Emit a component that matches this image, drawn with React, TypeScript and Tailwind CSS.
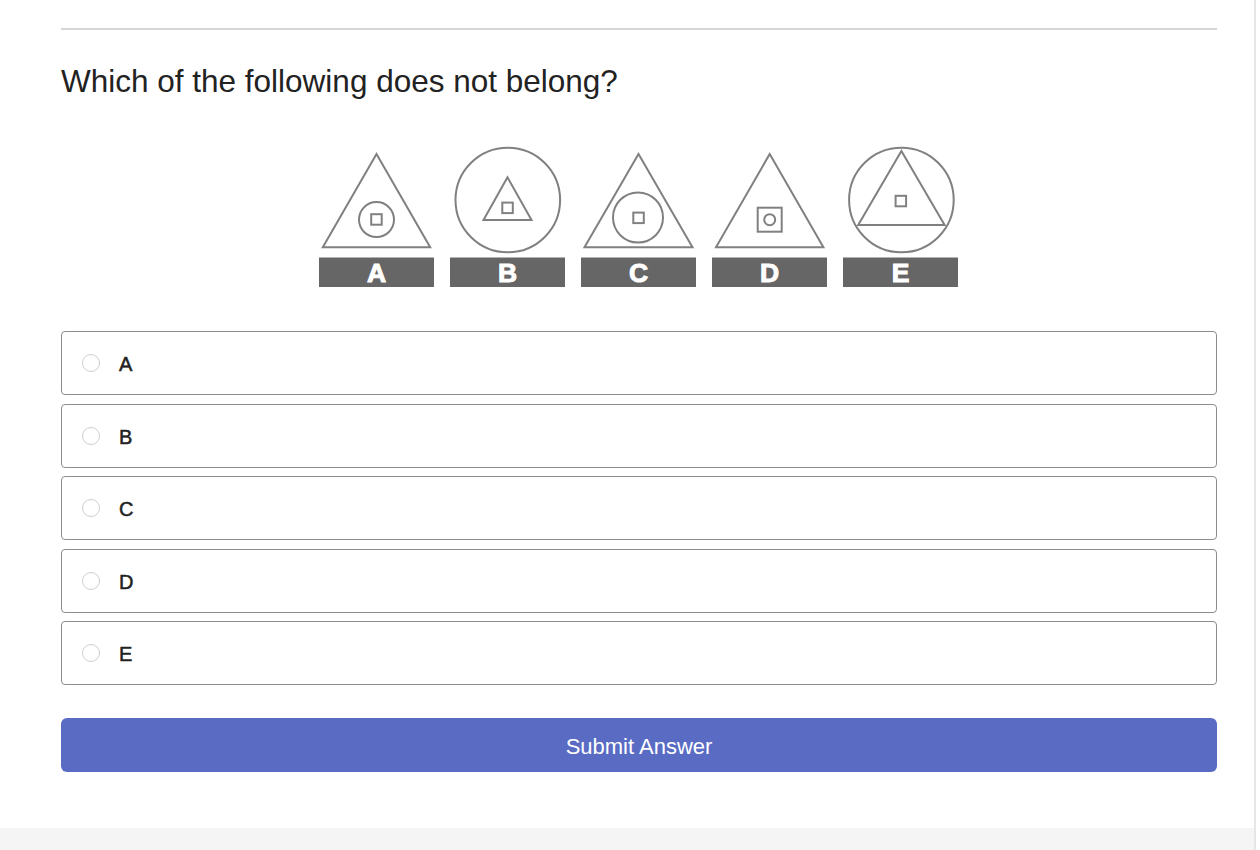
import { useState } from 'react';

const options = ['A', 'B', 'C', 'D', 'E'];

const stroke = '#808080';

const FiguresRow = () => {
    const labels = ['A', 'B', 'C', 'D', 'E'];
    return (
        <svg width="640" height="142" viewBox="0 0 640 142" fill="none">
            {/* A: triangle with circle and square */}
            <polygon points="57.5,8 3.8,101.3 111.2,101.3" stroke={stroke} strokeWidth="2" />
            <circle cx="57.5" cy="73.6" r="17.5" stroke={stroke} strokeWidth="2" />
            <rect x="52.2" y="68.2" width="10.5" height="10.5" stroke={stroke} strokeWidth="2" />

            {/* B: circle with small triangle and square */}
            <circle cx="188.8" cy="54" r="52.3" stroke={stroke} strokeWidth="2" />
            <polygon points="188.5,31.3 164.5,74 212.5,74" stroke={stroke} strokeWidth="2" />
            <rect x="183.3" y="56.6" width="10.5" height="10.5" stroke={stroke} strokeWidth="2" />

            {/* C: triangle with larger circle and square */}
            <polygon points="319.5,8 265.5,101.3 373.5,101.3" stroke={stroke} strokeWidth="2" />
            <circle cx="319" cy="71.5" r="25" stroke={stroke} strokeWidth="2" />
            <rect x="314.3" y="66.6" width="10.5" height="10.5" stroke={stroke} strokeWidth="2" />

            {/* D: triangle with square and circle */}
            <polygon points="450.7,8 397,101.3 504.4,101.3" stroke={stroke} strokeWidth="2" />
            <rect x="438.7" y="61.7" width="24" height="24" stroke={stroke} strokeWidth="2" />
            <circle cx="450.7" cy="73.7" r="5.5" stroke={stroke} strokeWidth="2" />

            {/* E: circle with inscribed triangle and square */}
            <circle cx="582.4" cy="54" r="52.3" stroke={stroke} strokeWidth="2" />
            <polygon points="582.4,5 539.2,79 625.6,79" stroke={stroke} strokeWidth="2" />
            <rect x="576.6" y="49.8" width="10.5" height="10.5" stroke={stroke} strokeWidth="2" />

            {labels.map((l, i) => (
                <g key={l}>
                    <rect x={i * 131} y="111.5" width="115" height="29.5" fill="#666666" />
                    <text
                        x={57.5 + i * 131}
                        y="135.8"
                        textAnchor="middle"
                        fill="#ffffff"
                        stroke="#ffffff"
                        strokeWidth="1"
                        fontFamily="'Liberation Sans', Arial, sans-serif"
                        fontWeight="700"
                        fontSize="26.5"
                    >
                        {l}
                    </text>
                </g>
            ))}
        </svg>
    );
};

const App = () => {
    const [selected, setSelected] = useState<string | null>(null);

    return (
        <div
            className="flex h-[850px] w-[1260px] bg-white text-[#222222]"
            style={{ fontFamily: "'Liberation Sans', Arial, Helvetica, sans-serif" }}
        >
            <div className="flex w-[1254px] flex-col">
                <div className="flex flex-1 flex-col pl-[61px] pt-[28px]">
                    <div className="w-[1156px]">
                        <div className="h-[2px] bg-[#d6d6d6]" />

                        <h1 className="mt-[32px] text-[31.5px] leading-[38px] font-normal">
                            Which of the following does not belong?
                        </h1>

                        <div className="mt-[46px] flex justify-center">
                            <FiguresRow />
                        </div>

                        <div className="mt-[43px] flex flex-col gap-[8.5px]">
                            {options.map(opt => (
                                <label
                                    key={opt}
                                    onClick={() => setSelected(opt)}
                                    className="flex h-[64px] cursor-pointer items-center rounded-[4px] border border-[#8c8c8c] bg-white pl-[20px]"
                                >
                                    <span
                                        className={`h-[18px] w-[18px] rounded-full border ${
                                            selected === opt ? 'border-[5px] border-[#5a6bc4]' : 'border-[#cfcfcf]'
                                        }`}
                                    />
                                    <span className="ml-[19px] pt-[2px] text-[20px] font-normal [-webkit-text-stroke:0.5px_#222222]">
                                        {opt}
                                    </span>
                                </label>
                            ))}
                        </div>

                        <button className="mt-[32.5px] flex h-[54px] w-full items-center justify-center rounded-[6px] bg-[#5a6bc4] pt-[3px] text-[22px] text-white">
                            Submit Answer
                        </button>
                    </div>
                </div>
                <div className="h-[22px] bg-[#f5f5f5]" />
            </div>
            <div className="w-[2px] bg-[#e6e6e6]" />
            <div className="flex-1 bg-white" />
        </div>
    );
};

export default App;
